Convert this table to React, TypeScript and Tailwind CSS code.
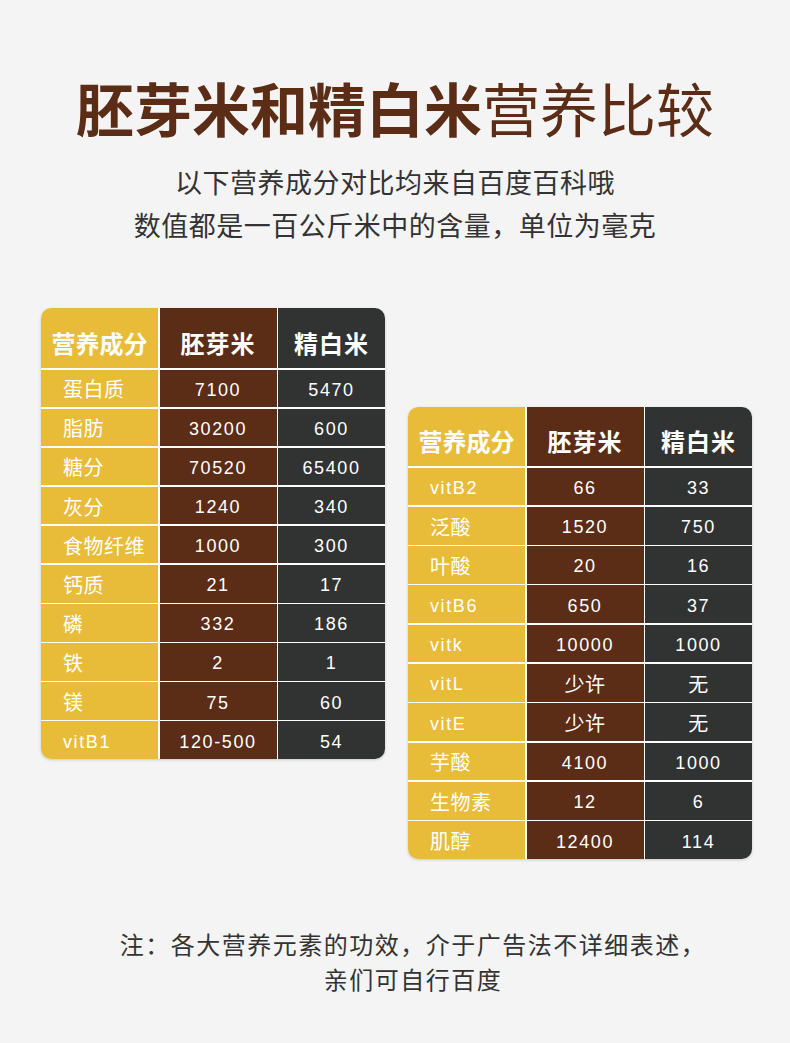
import React from "react";

type Row = [string, string, string];

const leftRows: Row[] = [
  ["蛋白质", "7100", "5470"],
  ["脂肪", "30200", "600"],
  ["糖分", "70520", "65400"],
  ["灰分", "1240", "340"],
  ["食物纤维", "1000", "300"],
  ["钙质", "21", "17"],
  ["磷", "332", "186"],
  ["铁", "2", "1"],
  ["镁", "75", "60"],
  ["vitB1", "120-500", "54"],
];

const rightRows: Row[] = [
  ["vitB2", "66", "33"],
  ["泛酸", "1520", "750"],
  ["叶酸", "20", "16"],
  ["vitB6", "650", "37"],
  ["vitk", "10000", "1000"],
  ["vitL", "少许", "无"],
  ["vitE", "少许", "无"],
  ["芋酸", "4100", "1000"],
  ["生物素", "12", "6"],
  ["肌醇", "12400", "114"],
];

const isLatin = (s: string) => /^[\x00-\x7f]+$/.test(s);

function Cell({ text, className }: { text: string; className: string }) {
  const size = isLatin(text) ? "text-[18px] tracking-[1.6px]" : "text-[20px] tracking-[0.5px]";
  return <div className={`pt-[4px] flex items-center text-white ${size} ${className}`}>{text}</div>;
}

function NutritionTable({ rows, headerH, rowH }: { rows: Row[]; headerH: string; rowH: string }) {
  return (
    <div className="w-[344px] rounded-[10px] overflow-hidden bg-white shadow-[0_1px_3px_rgba(0,0,0,0.18)]">
      <div className="grid grid-cols-[117px_117px_107px] gap-[1.5px]">
        <div className={`${headerH} pt-[13px] bg-[#e8bc38] flex items-center justify-center text-white text-[24px] font-bold`}>营养成分</div>
        <div className={`${headerH} pt-[13px] bg-[#5b2c16] flex items-center justify-center text-white text-[24px] font-bold tracking-[1px]`}>胚芽米</div>
        <div className={`${headerH} pt-[13px] bg-[#313332] flex items-center justify-center text-white text-[24px] font-bold tracking-[1px]`}>精白米</div>
        {rows.map(([label, a, b], i) => (
          <React.Fragment key={i}>
            <Cell text={label} className={`${rowH} bg-[#e8bc38] pl-[22px]`} />
            <Cell text={a} className={`${rowH} bg-[#5b2c16] justify-center`} />
            <Cell text={b} className={`${rowH} bg-[#313332] justify-center`} />
          </React.Fragment>
        ))}
      </div>
    </div>
  );
}

export default function App() {
  return (
    <div
      className="min-h-[1043px] w-[790px] bg-[#f4f4f4] flex flex-col items-center"
      style={{ fontFamily: '"Liberation Sans", "Noto Sans CJK SC", sans-serif' }}
    >
      {/* Title */}
      <h1 className="mt-[83px] text-[58px] leading-[58px] text-[#5b2c16]">
        <span className="font-bold">胚芽米和精白米</span>
        <span className="font-normal">营养比较</span>
      </h1>

      <div className="mt-[22px] text-center text-[27px] leading-[43px] tracking-[0.5px] text-[#333333]">
        <p>以下营养成分对比均来自百度百科哦</p>
        <p>数值都是一百公斤米中的含量，单位为毫克</p>
      </div>

      {/* Tables */}
      <div className="mt-[59px] w-full flex items-start pl-[41px] gap-[23px]">
        <NutritionTable rows={leftRows} headerH="h-[60px]" rowH="h-[37.6px]" />
        <div className="mt-[99px]">
          <NutritionTable rows={rightRows} headerH="h-[59px]" rowH="h-[37.8px]" />
        </div>
      </div>

      <div className="mt-[69px] ml-[36px] text-center text-[24px] leading-[35px] tracking-[1.5px] text-[#333333]">
        <p>注：各大营养元素的功效，介于广告法不详细表述，</p>
        <p>亲们可自行百度</p>
      </div>
    </div>
  );
}
